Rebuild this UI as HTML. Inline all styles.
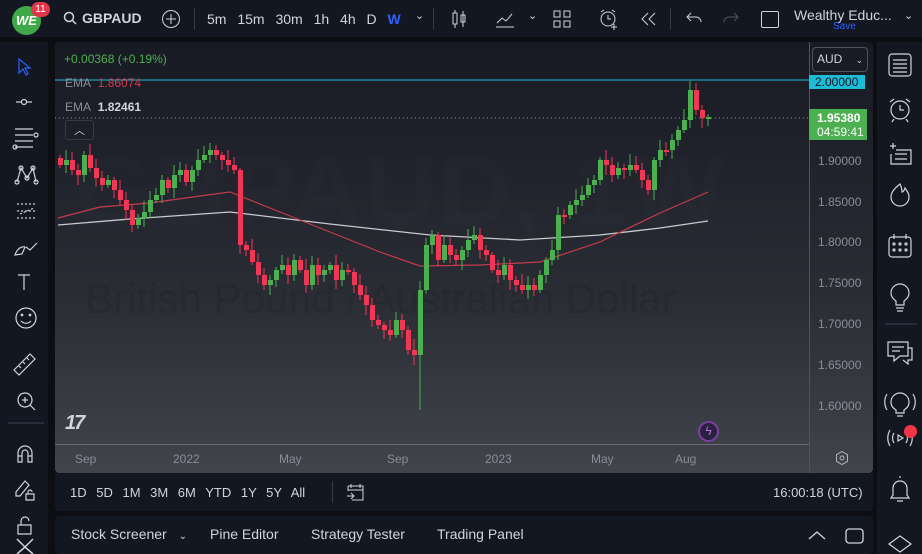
<!DOCTYPE html>
<html><head><meta charset="utf-8"><style>
*{margin:0;padding:0;box-sizing:border-box}
body{width:922px;height:554px;background:#0c0e14;font-family:"Liberation Sans",sans-serif;color:#d1d4dc;position:relative;overflow:hidden}
.abs{position:absolute}
#top{left:0;top:0;width:922px;height:37px;background:#131722}
#left{left:0;top:42px;width:48px;height:512px;background:#131722}
#right{left:877px;top:42px;width:45px;height:512px;background:#131722}
#chart{left:55px;top:42px;width:818px;height:431px;background:linear-gradient(#171a23,#2b2d35 60%,#42444c);border-radius:4px;overflow:hidden}
#rng{left:55px;top:473px;width:818px;height:38px;background:#131722;border-radius:0 0 4px 4px}
#bot{left:55px;top:516px;width:818px;height:38px;background:#131722;border-radius:4px}
.t{font-size:14px;color:#d1d4dc;white-space:nowrap}
.ax{font-size:12px;color:#8a8d96}
svg{position:absolute}
</style></head><body>
<div id="top" class="abs">
 <div class="abs" style="left:12px;top:6px;width:29px;height:29px;border-radius:50%;background:#3fa94a;color:#fff;font-weight:bold;font-size:13px;text-align:center;line-height:29px;font-style:italic">WE</div>
 <div class="abs" style="left:31px;top:2px;width:19px;height:15px;border-radius:8px;background:#e2374a;color:#fff;font-size:10px;text-align:center;line-height:15px">11</div>
 <svg style="left:63px;top:11px" width="14" height="14"><circle cx="6" cy="6" r="4.5" stroke="#d1d4dc" stroke-width="1.5" fill="none"/><line x1="9.5" y1="9.5" x2="13" y2="13" stroke="#d1d4dc" stroke-width="1.5"/></svg>
 <div class="abs t" style="left:82px;top:10px;font-weight:bold">GBPAUD</div>
 <svg style="left:161px;top:9px" width="20" height="20"><circle cx="10" cy="10" r="8.5" stroke="#d1d4dc" fill="none"/><path d="M10 5v10M5 10h10" stroke="#d1d4dc"/></svg>
 <div class="abs" style="left:194px;top:8px;width:1px;height:22px;background:#363a45"></div>
 <div class="abs t" style="left:207px;top:11px;word-spacing:7px">5m 15m 30m 1h 4h D <span style="color:#2962ff;font-weight:bold">W</span></div>
 <div class="abs t" style="left:415px;top:9px;font-size:11px">⌄</div>
 <div class="abs" style="left:433px;top:8px;width:1px;height:22px;background:#363a45"></div>
 <svg style="left:450px;top:9px" width="18" height="20"><rect x="3" y="4" width="4" height="11" stroke="#d1d4dc" fill="none"/><path d="M5 1v3M5 15v4M13 2v16" stroke="#d1d4dc"/><rect x="11" y="6" width="4" height="7" stroke="#d1d4dc" fill="none"/></svg>
 <svg style="left:494px;top:9px" width="22" height="20"><path d="M2 18h18M3 14l5-5 4 3 6-7" stroke="#d1d4dc" fill="none"/></svg>
 <div class="abs t" style="left:528px;top:9px;font-size:11px">⌄</div>
 <svg style="left:552px;top:9px" width="20" height="20"><rect x="2" y="2" width="6" height="6" stroke="#d1d4dc" fill="none"/><rect x="12" y="2" width="6" height="6" stroke="#d1d4dc" fill="none"/><rect x="2" y="12" width="6" height="6" stroke="#d1d4dc" fill="none"/><rect x="12" y="12" width="6" height="6" stroke="#d1d4dc" fill="none"/></svg>
 <svg style="left:598px;top:8px" width="22" height="22"><circle cx="10" cy="11" r="7" stroke="#d1d4dc" fill="none"/><path d="M10 7v4h3M3 4l3-2M17 4l-3-2M16 16v6M13 19h6" stroke="#d1d4dc" fill="none"/></svg>
 <svg style="left:640px;top:10px" width="18" height="18"><path d="M8 3L2 9l6 6M15 3L9 9l6 6" stroke="#d1d4dc" fill="none"/></svg>
 <div class="abs" style="left:670px;top:8px;width:1px;height:22px;background:#363a45"></div>
 <svg style="left:685px;top:10px" width="18" height="16"><path d="M6 3L2 7l4 4M2 7h9a5 5 0 015 5" stroke="#d1d4dc" fill="none"/></svg>
 <svg style="left:722px;top:10px" width="18" height="16"><path d="M12 3l4 4-4 4M16 7H7a5 5 0 00-5 5" stroke="#50535e" fill="none"/></svg>
 <div class="abs" style="left:761px;top:11px;width:18px;height:17px;border:1.5px solid #d1d4dc;border-radius:2px"></div>
 <div class="abs t" style="left:794px;top:7px">Wealthy Educ...</div>
 <div class="abs" style="left:833px;top:21px;font-size:10px;color:#2962ff">Save</div>
 <div class="abs t" style="left:904px;top:9px;font-size:11px">⌄</div>
</div>
<div id="left" class="abs">
<svg style="left:0;top:0" width="48" height="512" fill="none" stroke="#d1d4dc" stroke-width="1.2">
 <path d="M19 17l0 14 4-4 3 6 2-1-3-6h5z" stroke="#2962ff"/>
 <path d="M16 60h16"/><circle cx="24" cy="60" r="2.5" fill="#131722"/>
 <path d="M15 87h18M15 93h18M15 99h18M15 105h18"/><circle cx="36" cy="93" r="2"/><circle cx="15" cy="105" r="2"/>
 <path d="M17 140l4-14 6 10 6-10 3 14M21 126l6 10"/><circle cx="17" cy="140" r="2"/><circle cx="21" cy="126" r="2"/><circle cx="27" cy="136" r="2"/><circle cx="33" cy="126" r="2"/><circle cx="36" cy="140" r="2"/>
 <path d="M17 162h20M17 169h20M17 176h20M20 172l14-6" stroke-dasharray="2 2"/>
 <path d="M15 213c2-6 6-9 10-8l-3 7zM26 205l4 3 7-7"/>
 <path d="M18 233h12M24 233v15"/>
 <circle cx="26" cy="276" r="10"/><circle cx="22" cy="273" r=".8"/><circle cx="30" cy="273" r=".8"/><path d="M21 279c3 3 7 3 10 0"/>
 <path d="M14 328l16-16 5 5-16 16zM19 324l2 2M23 320l2 2M27 316l2 2"/>
 <circle cx="25" cy="358" r="7"/><path d="M30 363l5 5M22 358h6M25 355v6"/>
 <path d="M8 381h36" stroke="#363a45"/>
 <path d="M18 420v-9a7 7 0 0114 0v9h-4v-9a3 3 0 00-6 0v9zM18 414h4M28 414h4"/>
 <path d="M16 450l9-11 4 4-9 11h-4zM26 452h8v6h-8zM28 452v-2a2 2 0 014 0"/>
 <path d="M18 483h13v9H18zM21 483v-4a4 4 0 018 0"/>
 <path d="M17 497l8 8 8-8M17 512l8-7 8 7" stroke-width="1.5"/>
</svg>
</div>
<div id="right" class="abs">
<svg style="left:0;top:0" width="45" height="512" fill="none" stroke="#d1d4dc" stroke-width="1.2">
 <rect x="12" y="12" width="22" height="22" rx="3"/><path d="M16 18h14M16 22h14M16 26h14M16 30h14"/>
 <circle cx="23" cy="68" r="9"/><path d="M23 63v5h4M13 60l4-3M33 60l-4-3M17 77l-2 3M29 77l2 3"/>
 <path d="M13 104h6M16 101v6M19 108h15v14H14v-10M18 112h12M18 117h12"/>
 <path d="M23 142c-5 4-9 8-9 13 0 5 4 9 9 9s9-4 9-9c0-4-2-6-4-9-1 3-2 4-3 4 0-3-1-6-2-8z"/>
 <rect x="12" y="195" width="22" height="20" rx="3"/><path d="M17 192v5M29 192v5"/><circle cx="17" cy="202" r="1"/><circle cx="23" cy="202" r="1"/><circle cx="29" cy="202" r="1"/><circle cx="17" cy="208" r="1"/><circle cx="23" cy="208" r="1"/><circle cx="29" cy="208" r="1"/>
 <path d="M19 259c-3-2-5-5-5-8a9 9 0 0118 0c0 3-2 6-5 8v4h-8zM19 266h8M20 269h6"/>
 <path d="M8 282h32" stroke="#363a45"/>
 <path d="M11 300h20v14h-8l-6 5v-5h-6zM15 305h12M15 309h8M31 306h4v12h-4v4l-5-4"/>
 <path d="M19 368c-3-2-5-4-5-8a9 9 0 0118 0c0 4-2 6-5 8v3h-8zM20 374h6M10 352c-3 5-3 11 0 16M36 352c3 5 3 11 0 16"/>
 <path d="M13 388c-3 5-3 11 0 16M33 388c3 5 3 11 0 16M17 391c-2 3-2 7 0 10M29 391c2 3 2 7 0 10M21 393l5 3-5 3z"/>
 <path d="M23 434v2M16 453v-7a7 7 0 0114 0v7l2 3H14zM20 459h6"/>
 <path d="M23 494l11 8-11 8-11-8z"/>
</svg>
<div class="abs" style="left:27px;top:383px;width:13px;height:13px;border-radius:50%;background:#f23645"></div>
</div>

<div id="chart" class="abs">
 <div class="abs" style="left:20px;top:92px;font-size:100px;color:rgba(255,255,255,0.012);font-weight:bold;letter-spacing:2px">GBPAUD, 1W</div>
 <div class="abs" style="left:30px;top:233px;font-size:42px;color:rgba(0,0,0,0.08)">British Pound / Australian Dollar</div>
 <svg id="cs" style="left:0;top:0" width="818" height="431"></svg>
 <div class="abs" style="left:9px;top:10px;font-size:12px;color:#4caf50">+0.00368 (+0.19%)</div>
 <div class="abs" style="left:10px;top:34px;font-size:12px;color:#8a8d96">EMA <span style="color:#d6384d;margin-left:4px">1.86074</span></div>
 <div class="abs" style="left:10px;top:58px;font-size:12px;color:#8a8d96">EMA <span style="color:#d1d4dc;margin-left:4px;font-weight:bold">1.82461</span></div>
 <div class="abs" style="left:10px;top:78px;width:29px;height:20px;border:1px solid #363a45;border-radius:3px;background:#1c1f28;text-align:center;font-size:11px;line-height:20px">︿</div>
 <div class="abs" style="left:754px;top:0;width:1px;height:431px;background:#50535e"></div>
 <div class="abs" style="left:0;top:402px;width:754px;height:1px;background:#6a6d78"></div>
 <div class="abs" style="left:757px;top:5px;width:56px;height:25px;border:1px solid #50535e;border-radius:4px;font-size:12px;line-height:23px;padding-left:4px">AUD <span style="font-size:9px;margin-left:10px">⌄</span></div>
 <div class="abs" style="left:754px;top:33px;width:56px;height:14px;background:#1ebbd7;color:#131722;font-size:12px;line-height:14px;padding-left:6px">2.00000</div>
 <div class="abs" style="left:754px;top:67px;width:58px;height:31px;background:#4caf50;color:#fff;font-size:12px;line-height:14px;padding:2px 0 0 8px;font-weight:bold">1.95380<br><span style="font-weight:normal">04:59:41</span></div>
 <div class="abs ax" style="left:763px;top:112px">1.90000</div>
 <div class="abs ax" style="left:763px;top:153px">1.85000</div>
 <div class="abs ax" style="left:763px;top:193px">1.80000</div>
 <div class="abs ax" style="left:763px;top:234px">1.75000</div>
 <div class="abs ax" style="left:763px;top:275px">1.70000</div>
 <div class="abs ax" style="left:763px;top:316px">1.65000</div>
 <div class="abs ax" style="left:763px;top:357px">1.60000</div>
 <div class="abs ax" style="left:20px;top:410px">Sep</div>
 <div class="abs ax" style="left:118px;top:410px">2022</div>
 <div class="abs ax" style="left:224px;top:410px">May</div>
 <div class="abs ax" style="left:332px;top:410px">Sep</div>
 <div class="abs ax" style="left:430px;top:410px">2023</div>
 <div class="abs ax" style="left:536px;top:410px">May</div>
 <div class="abs ax" style="left:620px;top:410px">Aug</div>
 <svg style="left:779px;top:408px" width="16" height="16" fill="none" stroke="#b2b5be"><path d="M8 1.5l5.5 3.2v6.6L8 14.5l-5.5-3.2V4.7z"/><circle cx="8" cy="8" r="2"/></svg>
 <div class="abs" style="left:10px;top:370px;font-weight:900;font-size:20px;color:#d1d4dc;font-style:italic;letter-spacing:-2px">17</div>
 <div class="abs" style="left:643px;top:379px;width:21px;height:21px;border-radius:50%;border:2px solid #7b3f9e;background:#2a2040;color:#b36ae2;font-size:12px;text-align:center;line-height:17px">ϟ</div>
</div>
<div id="rng" class="abs">
 <div class="abs t" style="left:15px;top:12px;font-size:13px;word-spacing:6px">1D 5D 1M 3M 6M YTD 1Y 5Y All</div>
 <div class="abs" style="left:277px;top:8px;width:1px;height:22px;background:#363a45"></div>
 <svg style="left:290px;top:9px" width="20" height="20" fill="none" stroke="#d1d4dc"><path d="M3 4h15v14H7M3 4v5M6 2v4M15 2v4M3 8h15M2 14h7M6 11l3 3-3 3"/></svg>
 <div class="abs t" style="left:718px;top:12px;font-size:13px">16:00:18 (UTC)</div>
</div>
<div id="bot" class="abs">
 <div class="abs t" style="left:16px;top:10px">Stock Screener <span style="font-size:10px;margin-left:8px">⌄</span></div>
 <div class="abs t" style="left:155px;top:10px">Pine Editor</div>
 <div class="abs t" style="left:256px;top:10px">Strategy Tester</div>
 <div class="abs t" style="left:382px;top:10px">Trading Panel</div>
 <svg style="left:752px;top:10px" width="60" height="20" fill="none" stroke="#d1d4dc" stroke-width="1.3"><path d="M2 13l8-7 8 7"/><rect x="39" y="3" width="17" height="14" rx="3"/></svg>
</div>
<script>
var ys=[165,160,170,175,155,168,178,185,180,190,200,210,225,218,212,200,195,180,188,175,170,182,170,160,155,150,155,160,165,170,245,250,262,275,285,280,270,265,275,260,270,285,265,275,270,265,280,270,272,285,295,305,320,325,330,335,320,330,350,355,290,245,235,260,245,255,260,250,240,235,250,255,270,275,265,280,285,290,285,290,275,260,250,215,215,205,200,195,185,180,160,165,175,168,170,165,170,180,190,160,150,150,140,130,120,90,110,118,117];
var s='',ox=-55,oy=-42,prev=158;
s+='<line x1="0" y1="'+(80+oy)+'" x2="754" y2="'+(80+oy)+'" stroke="#1ebbd7" stroke-width="1"/>';
s+='<line x1="0" y1="'+(118+oy)+'" x2="754" y2="'+(118+oy)+'" stroke="#4caf50" stroke-dasharray="1 3"/>';
s+='<path d="M'+[[58,225],[130,219],[230,212],[330,224],[430,235],[520,240],[600,235],[660,228],[708,221]].map(function(p){return (p[0]+ox)+' '+(p[1]+oy)}).join(' L')+'" stroke="#c7c9d0" stroke-width="1.3" fill="none"/>';
s+='<path d="M'+[[58,218],[100,207],[150,203],[200,196],[230,192],[280,212],[330,232],[380,252],[420,266],[480,265],[540,262],[600,242],[660,213],[708,192]].map(function(p){return (p[0]+ox)+' '+(p[1]+oy)}).join(' L')+'" stroke="#c23b4b" stroke-width="1.2" fill="none"/>';
for(var i=0;i<ys.length;i++){var x=58+6*i+ox,c=ys[i],o=prev;var up=c<o;var col=up?'#4caf50':'#f23656';var t=Math.min(o,c),b=Math.max(o,c);if(b-t<2)b=t+2;var h=t-3-((i*7)%9),l=b+3+((i*5)%8);if(i==60)l=410;if(i==30)h=t-2;
s+='<line x1="'+(x+2)+'" y1="'+(h+oy)+'" x2="'+(x+2)+'" y2="'+(l+oy)+'" stroke="'+col+'"/><rect x="'+x+'" y="'+(t+oy)+'" width="5" height="'+(b-t)+'" fill="'+col+'"/>';prev=c;}
document.getElementById('cs').innerHTML=s;
</script>
</body></html>
